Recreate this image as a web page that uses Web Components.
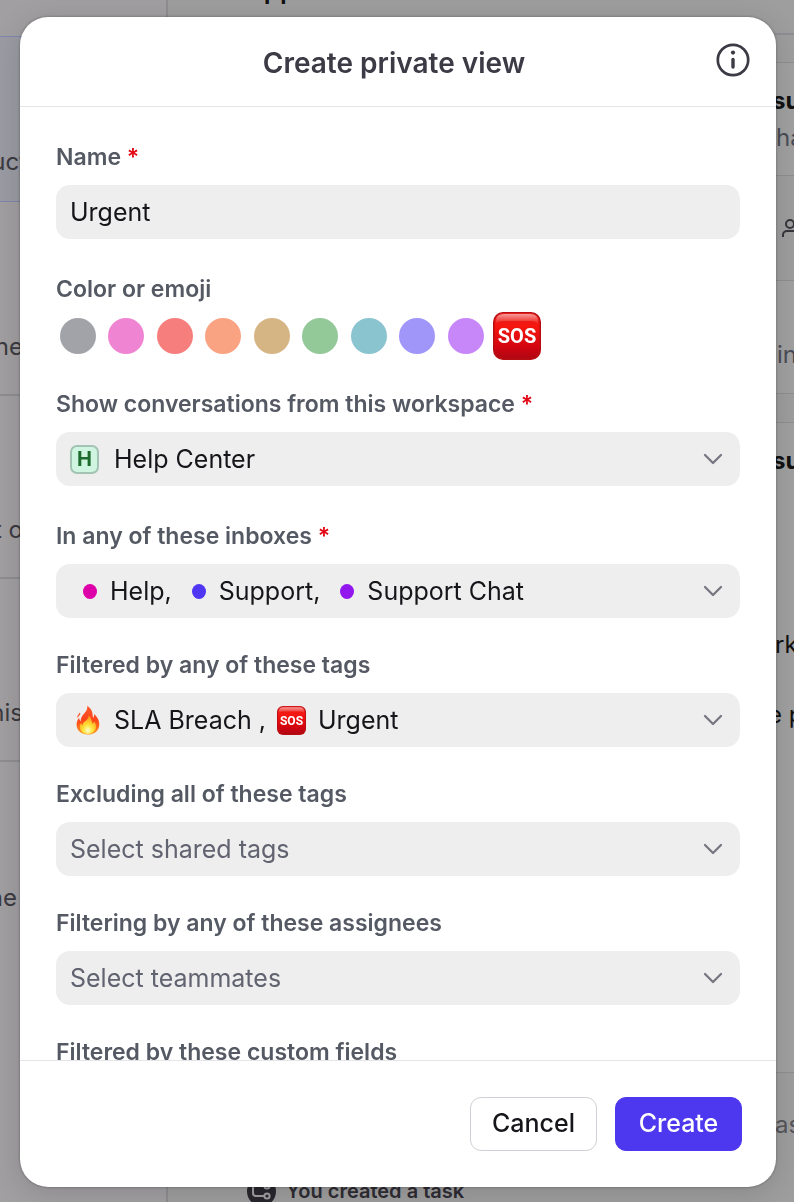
<!DOCTYPE html>
<html lang="en">
<head>
<meta charset="utf-8">
<meta name="viewport" content="width=device-width, initial-scale=1">
<title>Create private view</title>
<style>
  html, body { height: 100%; margin: 0; }
  body {
    font-family: Inter, "Noto Sans", sans-serif;
    font-size: 25px;
    color: #15151a;
    overflow: hidden;
    background: #9f9e9f;
  }
</style>
</head>
<body>
<inbox-backdrop></inbox-backdrop>
<view-dialog heading="Create private view">
  <form-field label="Name" required kind="text" value="Urgent"></form-field>
  <color-picker label="Color or emoji"></color-picker>
  <form-field label="Show conversations from this workspace" required kind="select" value="Help Center">
    <workspace-badge slot="icon">H</workspace-badge>
  </form-field>
  <form-field label="In any of these inboxes" required kind="multi">
    <inbox-chip color="#dd00a9">Help,</inbox-chip>
    <inbox-chip color="#4e36f2">Support,</inbox-chip>
    <inbox-chip color="#9216ee">Support Chat</inbox-chip>
  </form-field>
  <form-field label="Filtered by any of these tags" kind="multi">
    <tag-chip><fire-emoji slot="icon"></fire-emoji>SLA Breach ,</tag-chip>
    <tag-chip><sos-emoji slot="icon"></sos-emoji>Urgent</tag-chip>
  </form-field>
  <form-field label="Excluding all of these tags" kind="select" placeholder="Select shared tags"></form-field>
  <form-field label="Filtering by any of these assignees" kind="select" placeholder="Select teammates"></form-field>
  <form-field label="Filtered by these custom fields" kind="select" placeholder="Select custom fields"></form-field>
  <dialog-button slot="actions">Cancel</dialog-button>
  <dialog-button slot="actions" primary>Create</dialog-button>
</view-dialog>

<script>
class Base extends HTMLElement {
  connectedCallback() {
    if (this.shadowRoot) return;
    this.attachShadow({ mode: 'open' }).innerHTML = this.render();
  }
}
const define = (name, render) =>
  customElements.define(name, class extends Base { render() { return render(this); } });

/* The dimmed inbox page that lies under the dialog */
define('inbox-backdrop', () => `
<style>
  :host { display: flex; height: 100%; overflow: hidden; color: #3b3a40; font-size: 24px; line-height: 32px; white-space: nowrap; }
  .list { flex: 0 0 168px; border-right: 2px solid #8e8d90; background: #a19fa1; box-sizing: border-box; }
  .row { height: 183px; box-sizing: border-box; border-bottom: 2px solid #8e8d90; display: flex; align-items: flex-end; padding-bottom: 31px; }
  .row span { width: 23px; display: flex; justify-content: flex-end; }
  .row.first { height: 37px; border-bottom: 1px solid #7f86ae; padding: 0; }
  .row.on { height: 165px; background: #9b9ca3; border-bottom: 1px solid #7f86ae; padding-bottom: 23px; }
  .row.on span { width: 27px; }
  .row.tall { height: 194px; }
  .row:last-child { border: 0; }
  .row:last-child span { width: 17px; }
  .thread { flex: 1; display: flex; flex-direction: column; min-width: 0; position: relative; }
  .top { height: 35px; border-bottom: 2px solid #8e8d91; flex: none; box-sizing: border-box; display: flex; align-items: flex-end; padding: 0 0 27px 63px; color: #111; font-size: 26px; font-weight: 600; }
  .side { align-self: flex-end; width: 26px; flex: none; display: flex; flex-direction: column; }
  .card { background: #a1a1a1; border: solid #8f8f91; border-width: 1px 0; box-sizing: border-box; color: #4a4d57; }
  .a { margin-top: 27px; height: 114px; padding: 17px 0 0; }
  .a b { line-height: 42px; }
  .a span { padding-left: 8px; }
  .people { height: 104px; box-sizing: border-box; padding: 43px 0 0 14px; }
  .b { height: 114px; padding: 58px 0 0 9px; }
  .c { margin-top: 28px; height: 651px; padding: 22px 0 0; color: #111; }
  .c p { margin: 0; }
  .c .p1 { padding: 152px 0 0 7px; }
  .c .p2 { padding-top: 38px; }
  b { font-weight: 700; color: #111; display: block; padding-left: 4px; }
  .last { padding: 36px 0 0 7px; color: #55555b; }
  .event { position: absolute; left: 79px; bottom: -4px; display: flex; align-items: center; gap: 10px; font-size: 20px; line-height: 29px; font-weight: 600; color: #2e2c33; }
  svg { display: block; }
</style>
<div class="list">
  <div class="row first"></div>
  <div class="row on"><span>uct</span></div>
  <div class="row tall"><span>ne</span></div>
  <div class="row"><span>t o</span></div>
  <div class="row"><span>his</span></div>
  <div class="row"><span>ne</span></div>
</div>
<div class="thread">
  <div class="top">Support</div>
  <div class="side">
    <div class="card a"><b>su</b><span>ha</span></div>
    <div class="people"><svg width="24" height="20" viewBox="0 0 24 20" fill="none" stroke="#36353c" stroke-width="2"><circle cx="8" cy="5" r="4"/><path d="M1 18v-2a4 4 0 0 1 4-4h6a4 4 0 0 1 4 4v2"/></svg></div>
    <div class="card b">in</div>
    <div class="card c"><b>su</b><p class="p1">rk</p><p class="p2">e p</p></div>
    <div class="last">as</div>
  </div>
  <div class="event"><svg width="29" height="29" viewBox="0 0 29 29" fill="none" stroke="#a09fa2" stroke-width="2"><circle cx="14.500" cy="14.500" r="14.500" fill="#29272e" stroke="none"/><path d="M17 8H9a3 3 0 0 0-3 3v5a3 3 0 0 0 3 3h8M17 8h3"/><circle cx="20" cy="9" r="2.600"/><circle cx="20" cy="19" r="2.600"/></svg>You created a task</div>
</div>`);

define('view-dialog', el => `
<style>
  :host {
    position: fixed; inset: 17px 18px 15px 20px;
    display: flex; flex-direction: column; overflow: hidden;
    background: #fff; border-radius: 28px;
    box-shadow: 0 0 3px rgba(0,0,0,.35), 0 6px 30px rgba(0,0,0,.14);
  }
  header { flex: none; height: 90px; box-sizing: border-box; border-bottom: 1px solid #e6e6e9; display: grid; grid-template-columns: 1fr auto 1fr; align-items: center; padding: 0 26px 4px 18px; }
  h1 { grid-column: 2; margin: 0; padding-top: 6px; font-size: 28px; line-height: 36px; font-weight: 600; color: #3c3a45; }
  .info { justify-self: end; border: 0; padding: 0; background: none; cursor: pointer; }
  svg { display: block; }
  main { flex: 1; min-height: 0; overflow: hidden; padding: 34px 36px 0; }
  footer { flex: none; border-top: 1px solid #e6e6e9; display: flex; justify-content: flex-end; gap: 18px; padding: 36px 34px; }
</style>
<header>
  <h1>${el.getAttribute('heading')}</h1>
  <button class="info" type="button" aria-label="About private views">
    <svg width="34" height="34" viewBox="0 0 34 34" fill="none" stroke="#3c3a45"><circle cx="17" cy="17" r="15.200" stroke-width="2.700"/><path d="M17 16.500v7.500" stroke-width="3.400" stroke-linecap="round"/><circle cx="17" cy="9.600" r="2.100" fill="#3c3a45" stroke="none"/></svg>
  </button>
</header>
<main><slot></slot></main>
<footer><slot name="actions"></slot></footer>`);

const labelCss = `
  label, .label { display: block; margin-bottom: 12px; font-size: 23px; line-height: 32px; font-weight: 600; color: #545963; }
  .req { color: #e30613; }`;

define('form-field', el => {
  const a = n => el.getAttribute(n) || '';
  const kind = a('kind');
  const chevron = kind === 'text' ? '' :
    '<svg class="chev" width="20" height="12" viewBox="0 0 20 12" fill="none" stroke="#777783" stroke-width="2.300" stroke-linecap="round" stroke-linejoin="round"><path d="M2 2l8 8 8-8"/></svg>';
  const control = {
    text: `<input id="c" type="text" value="${a('value')}">`,
    select: `<slot name="icon"></slot><select id="c" class="${a('value') ? '' : 'empty'}"><option>${a('value') || a('placeholder')}</option></select>`,
    multi: `<button id="c" type="button" aria-haspopup="listbox"><slot></slot></button>`
  }[kind];
  return `
<style>
  :host { display: block; margin-bottom: 31px; }
  :host([required]) { margin-bottom: 34px; }
  :host([required][kind=multi]) { margin-bottom: 31px; }
  ${labelCss}
  .box { display: flex; align-items: center; height: 54px; box-sizing: border-box; padding: 0 17px 0 14px; border-radius: 14px; background: #eee; }
  input, select, button { flex: 1; min-width: 0; height: 54px; border: 0; margin: 0; padding: 0; outline: 0; background: none; appearance: none; font: inherit; color: #15151a; text-align: left; }
  select.empty { color: #626371; }
  button { display: flex; align-items: center; }
  .chev { flex: none; }
</style>
<label for="c">${a('label')}${el.hasAttribute('required') ? ' <span class="req">*</span>' : ''}</label>
<div class="box">${control}${chevron}</div>`;
});

define('color-picker', el => {
  const colors = { Gray: '#a2a3a9', Pink: '#ee84d2', Red: '#f67f7d', Orange: '#f9a382', Tan: '#d5b583', Green: '#93c899', Teal: '#8ac4cf', Indigo: '#a095f9', Purple: '#c787f8' };
  return `
<style>
  :host { display: block; margin-bottom: 28px; }
  ${labelCss}
  .label { margin-bottom: 7px; }
  .row { display: flex; justify-content: space-between; width: 487px; max-width: 100%; margin-left: -2px; }
  .cell { width: 48px; height: 48px; margin: 0; display: grid; place-items: center; }
  .cell:last-child { margin-left: 3px; }
  input { grid-area: 1 / 1; appearance: none; width: 36px; height: 36px; margin: 0; border-radius: 50%; background: var(--c, none); }
  sos-emoji { grid-area: 1 / 1; --size: 48px; }
</style>
<div class="label" id="l">${el.getAttribute('label')}</div>
<div class="row" role="radiogroup" aria-labelledby="l">
  ${Object.entries(colors).map(([n, c]) => `<label class="cell"><input type="radio" name="c" aria-label="${n}" style="--c:${c}"></label>`).join('')}
  <label class="cell"><input type="radio" name="c" aria-label="Emoji" checked><sos-emoji></sos-emoji></label>
</div>`;
});

define('workspace-badge', () => `
<style>
  :host { flex: none; box-sizing: border-box; width: 29px; height: 29px; margin-right: 15px; display: grid; place-items: center; border: 2px solid #a3c4b5; border-radius: 7px; background: #cff4e0; color: #1d6b2d; font-size: 20px; line-height: 24px; font-weight: 700; }
</style><slot></slot>`);

define('inbox-chip', el => `
<style>
  :host { display: flex; align-items: center; margin: 0 7px 0 13px; white-space: nowrap; }
  i { width: 14px; height: 15px; margin-right: 13px; border-radius: 50%; background: ${el.getAttribute('color')}; }
</style><i></i><slot></slot>`);

define('tag-chip', () => `
<style>
  :host { display: flex; align-items: center; gap: 12px; margin-right: 11px; white-space: nowrap; }
  :host(:first-child) { margin-left: 4px; }
</style><slot name="icon"></slot><span><slot></slot></span>`);

define('sos-emoji', () => `
<style>:host { display: block; } svg { display: block; width: var(--size, 29px); height: var(--size, 29px); }</style>
<svg viewBox="0 0 48 48" role="img" aria-label="SOS">
  <defs>
    <linearGradient id="g" x1="0" y1="0" x2="0" y2="1"><stop offset="0" stop-color="#e8201c"/><stop offset=".3" stop-color="#f5160f"/><stop offset=".75" stop-color="#d20510"/><stop offset="1" stop-color="#b00712"/></linearGradient>
    <linearGradient id="s" x1="0" y1="0" x2="0" y2="1"><stop offset="0" stop-color="#fff" stop-opacity=".55"/><stop offset="1" stop-color="#fff" stop-opacity="0"/></linearGradient>
  </defs>
  <rect width="48" height="48" rx="10" fill="#b80d13"/>
  <rect x="1.500" y="1" width="45" height="45.500" rx="9" fill="url(#g)"/>
  <path d="M3 12V9q0-7 8-7h26q8 0 8 7v3q-2-3-7-3H10q-5 0-7 3z" fill="url(#s)"/>
  <text x="24" y="31" text-anchor="middle" font-family="Roboto,sans-serif" font-weight="700" font-size="20" fill="#fff">SOS</text>
</svg>`);

define('fire-emoji', () => `
<style>:host { display: block; } svg { display: block; }</style>
<svg width="28" height="30" viewBox="0 0 28 30" role="img" aria-label="Fire">
  <defs>
    <linearGradient id="o" x1="0" y1="0" x2="0" y2="1"><stop offset="0" stop-color="#ff5a2c"/><stop offset=".5" stop-color="#fb4419"/><stop offset="1" stop-color="#ff9a1f"/></linearGradient>
    <radialGradient id="i" cx=".5" cy=".8" r=".7"><stop offset="0" stop-color="#fffbd0"/><stop offset=".4" stop-color="#ffe53b"/><stop offset="1" stop-color="#ff9a1c"/></radialGradient>
  </defs>
  <path d="M13.200.8c2.600 1.700 4.600 4.200 5.200 7.200.4 1.900.3 3.600.6 5 .9-.8 1.300-2.200 1.100-4 2.800 2.300 5.200 6 5.200 10.400C25.300 25.300 20.600 29.500 14 29.500S2.600 25.500 2.600 19.700c0-2.600 1-5 2.500-6.900.2 1.600.7 2.900 1.600 3.500C6.700 12.200 9 10 11 7.600c1.700-2.100 2.700-4.200 2.200-6.800z" fill="url(#o)"/>
  <path d="M5.800 7.400c.9.900.6 2-.3 2.900-.9.900-1.500 1.600-1.400 2.900C2.300 11 4.500 9.400 5.800 7.400z" fill="#fb5a2a"/>
  <path d="M14.700 10.500c3 2.600 2.700 5.600 4.100 8.300.7-.5 1.100-1.300 1.200-2.200 1.500 1.700 2.300 3.500 2 5.700-.5 4-3.700 6.600-8 6.600-4.500 0-8-2.600-8.200-6.700-.1-1.600.4-3 1.200-4.100.4 1 .9 1.700 1.700 2.100.2-4.200 5.900-4.700 6-9.700z" fill="url(#i)"/>
</svg>`);

define('dialog-button', el => `
<style>
  :host { display: block; }
  button { display: block; box-sizing: border-box; width: 127px; height: 54px; padding: 0 0 2px; border: 1px solid #d0d0d6; border-radius: 11px; background: #fff; color: #15151a; font: inherit; font-weight: 500; cursor: pointer; }
  :host([primary]) button { border-color: #4e38ef; background: #4e38ef; color: #fff; }
</style><button type="button"><slot></slot></button>`);
</script>
</body>
</html>
